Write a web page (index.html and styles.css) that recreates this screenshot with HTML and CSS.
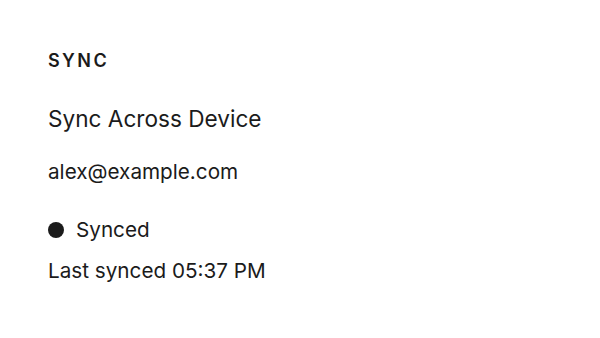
FILE: index.html
```html
<!DOCTYPE html>
<html>
<head>
<meta charset="utf-8">
<link rel="stylesheet" href="styles.css">
</head>
<body>
<section class="panel">
  <h2 class="eyebrow">SYNC</h2>
  <h1 class="title">Sync Across Device</h1>
  <p class="account">alex@example.com</p>
  <div class="status">
    <span class="dot"></span>
    <span class="status-label">Synced</span>
  </div>
  <p class="last">Last synced 05:37 PM</p>
</section>
</body>
</html>
```
FILE: styles.css
```css
html, body {
  margin: 0;
  padding: 0;
  background: #ffffff;
}
body {
  font-family: Inter, "Noto Sans", sans-serif;
  color: #1b1b1b;
  width: 600px;
  height: 338px;
}
.panel {
  padding: 50px 48px 0 48px;
  display: flex;
  flex-direction: column;
}
.eyebrow {
  margin: 0;
  font-size: 18px;
  font-weight: 600;
  letter-spacing: 2.4px;
  line-height: 22px;
}
.title {
  margin: 33px 0 0 0;
  font-size: 22.6px;
  font-weight: 400;
  line-height: 28px;
}
.account {
  margin: 26px 0 0 0;
  font-size: 20.7px;
  line-height: 26px;
}
.status {
  margin-top: 32px;
  display: flex;
  align-items: center;
  gap: 12px;
  font-size: 20.7px;
  line-height: 26px;
}
.dot {
  width: 16px;
  height: 16px;
  border-radius: 50%;
  background: #1b1b1b;
}
.last {
  margin: 15px 0 0 0;
  font-size: 20.7px;
  line-height: 26px;
}
```
